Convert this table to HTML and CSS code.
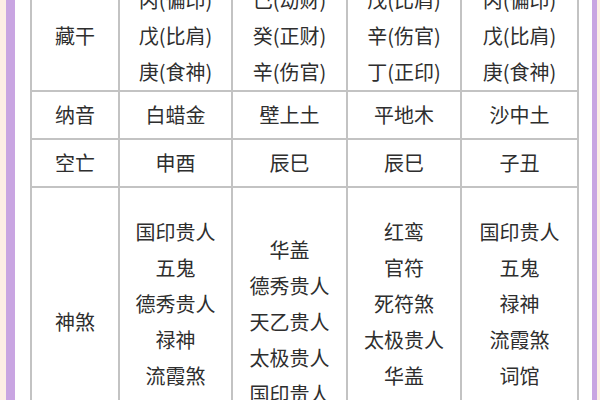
FILE: index.html
```html
<!DOCTYPE html>
<html lang="zh-CN">
<head>
<meta charset="utf-8">
<link rel="stylesheet" href="styles.css">
</head>
<body>
<div class="frame">
  <div class="edge peach-l"></div>
  <div class="edge purple-l"></div>
  <main class="content">
    <table class="chart">
      <colgroup>
        <col class="c-label"><col class="c1"><col class="c2"><col class="c3"><col class="c4">
      </colgroup>
      <tbody>
        <tr class="r-hidden">
          <td>藏干</td>
          <td><div>丙(偏印)</div><div>戊(比肩)</div><div>庚(食神)</div></td>
          <td><div>己(劫财)</div><div>癸(正财)</div><div>辛(伤官)</div></td>
          <td><div>戊(比肩)</div><div>辛(伤官)</div><div>丁(正印)</div></td>
          <td><div>丙(偏印)</div><div>戊(比肩)</div><div>庚(食神)</div></td>
        </tr>
        <tr class="r-single">
          <td>纳音</td><td>白蜡金</td><td>壁上土</td><td>平地木</td><td>沙中土</td>
        </tr>
        <tr class="r-single">
          <td>空亡</td><td>申酉</td><td>辰巳</td><td>辰巳</td><td>子丑</td>
        </tr>
        <tr class="r-gods">
          <td>神煞</td>
          <td><div>国印贵人</div><div>五鬼</div><div>德秀贵人</div><div>禄神</div><div>流霞煞</div><div>词馆</div></td>
          <td><div>华盖</div><div>德秀贵人</div><div>天乙贵人</div><div>太极贵人</div><div>国印贵人</div></td>
          <td><div>红鸾</div><div>官符</div><div>死符煞</div><div>太极贵人</div><div>华盖</div><div>天乙贵人</div></td>
          <td><div>国印贵人</div><div>五鬼</div><div>禄神</div><div>流霞煞</div><div>词馆</div><div>德秀贵人</div></td>
        </tr>
      </tbody>
    </table>
  </main>
  <div class="edge purple-r"></div>
  <div class="edge peach-r"></div>
</div>
</body>
</html>
```

FILE: styles.css
```css
html, body {
  margin: 0;
  padding: 0;
  background: #ffffff;
}

.frame {
  display: flex;
  height: 400px;
  overflow: hidden;
}

.edge {
  flex: none;
  height: 100%;
}

.peach-l { width: 6px; background: #fdeee5; }
.purple-l { width: 9px; background: #c9a5e2; }
.purple-r { width: 5px; background: #c9a5e2; }
.peach-r { width: 3px; background: #fdeee5; }

.content {
  flex: 1;
  min-width: 0;
  padding: 0 15px;
  background: #ffffff;
}

.chart {
  border-collapse: collapse;
  table-layout: fixed;
  width: 547px;
  margin-top: -20px;
  font-family: "Noto Sans CJK SC", "Noto Sans", sans-serif;
  font-size: 20px;
  color: #2e2e2e;
  line-height: 36px;
}

.c-label { width: 88px; }
.c1 { width: 113px; }
.c2 { width: 115px; }
.c3 { width: 114px; }
.c4 { width: 117px; }

.chart td {
  border: 2px solid #c3c3c3;
  text-align: center;
  vertical-align: middle;
  padding: 0 2px;
}

.r-hidden td { padding-top: 0; padding-bottom: 0; }
.r-single td { padding-top: 5px; padding-bottom: 5px; }
.r-gods td { padding-top: 26px; padding-bottom: 26px; }
```
